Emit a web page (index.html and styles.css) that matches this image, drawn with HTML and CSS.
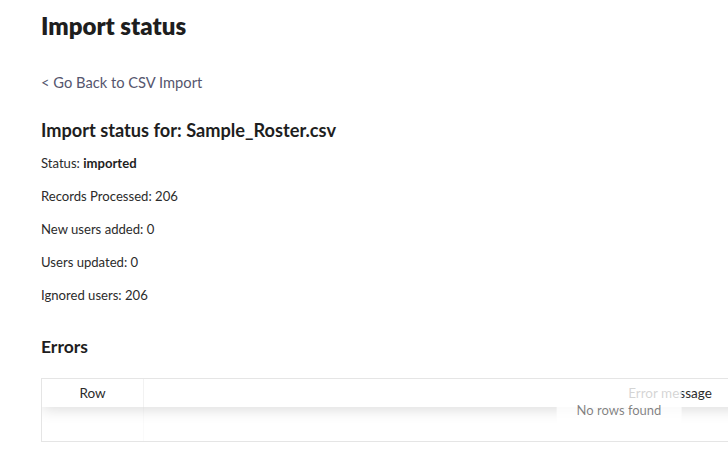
FILE: index.html
```html
<!DOCTYPE html>
<html lang="en">
  <head>
    <meta charset="UTF-8" />
    <meta name="viewport" content="width=device-width, initial-scale=1.0" />
    <title>Import status</title>
    <link rel="stylesheet" href="styles.css">
  </head>
  <body>
    <div class="page">
      <h1>Import status</h1>
      <a class="back-link" href="#">&lt; Go Back to CSV Import</a>
      <h2>Import status for: Sample_Roster.csv</h2>
      <p class="stat">Status: <strong>imported</strong></p>
      <p class="stat">Records Processed: 206</p>
      <p class="stat">New users added: 0</p>
      <p class="stat">Users updated: 0</p>
      <p class="stat">Ignored users: 206</p>
      <h3>Errors</h3>
      <div class="table">
        <div class="table-head">
          <div class="cell col-row">Row</div>
          <div class="cell col-msg">Error message</div>
        </div>
        <div class="table-body">
          <div class="cell col-row"></div>
          <div class="cell col-msg"></div>
        </div>
        <div class="no-data">No rows found</div>
      </div>
    </div>
  </body>
</html>
```

FILE: styles.css
```css
html,
body {
  overflow: hidden;
}
body {
  margin: 0;
  background: #fff;
  font-family: 'Lato', 'Source Sans Pro', 'Liberation Sans', sans-serif;
  color: #2b2b2b;
}
.page {
  padding: 11px 0 0 41px;
}
h1 {
  margin: 0;
  font-size: 24px;
  line-height: 30px;
  font-weight: 800;
  color: #1e1e1e;
}
.back-link {
  display: block;
  margin-top: 31px;
  font-size: 14.7px;
  line-height: 20px;
  color: #55566e;
  text-decoration: none;
}
h2 {
  margin: 27px 0 0;
  font-size: 18.2px;
  line-height: 22px;
  font-weight: 700;
  color: #1e1e1e;
}
.stat {
  margin: 0;
  font-size: 13.1px;
  line-height: 18px;
  color: #2b2b2b;
}
h2 + .stat {
  margin-top: 13px;
}
.stat + .stat {
  margin-top: 15px;
}
.stat strong {
  color: #1e1e1e;
}
h3 {
  margin: 33px 0 0;
  font-size: 17.5px;
  line-height: 20px;
  font-weight: 700;
  color: #1e1e1e;
}
.table {
  position: relative;
  width: 1154px;
  margin-top: 21px;
  border: 1px solid rgba(0,0,0,0.1);
  overflow: hidden;
}
.table-head,
.table-body {
  display: flex;
}
.table-head {
  position: relative;
  z-index: 1;
  height: 28px;
  background: #fff;
  box-shadow: 0 2px 15px 0 rgba(0,0,0,0.15);
}
.table-body {
  height: 34px;
}
.cell {
  box-sizing: border-box;
  font-size: 13.5px;
  line-height: 28px;
  text-align: center;
  color: #2b2b2b;
}
.col-row {
  width: 102px;
  border-right: 1px solid rgba(0,0,0,0.05);
}
.table-body .col-row {
  border-right-color: rgba(0,0,0,0.02);
}
.col-msg {
  flex: 1;
}
.no-data {
  position: absolute;
  z-index: 2;
  left: 50%;
  top: 50%;
  transform: translate(-50%, -50%);
  padding: 20px;
  background: rgba(255,255,255,0.8);
  font-size: 13px;
  line-height: 16px;
  color: rgba(0,0,0,0.5);
  white-space: nowrap;
}
```
